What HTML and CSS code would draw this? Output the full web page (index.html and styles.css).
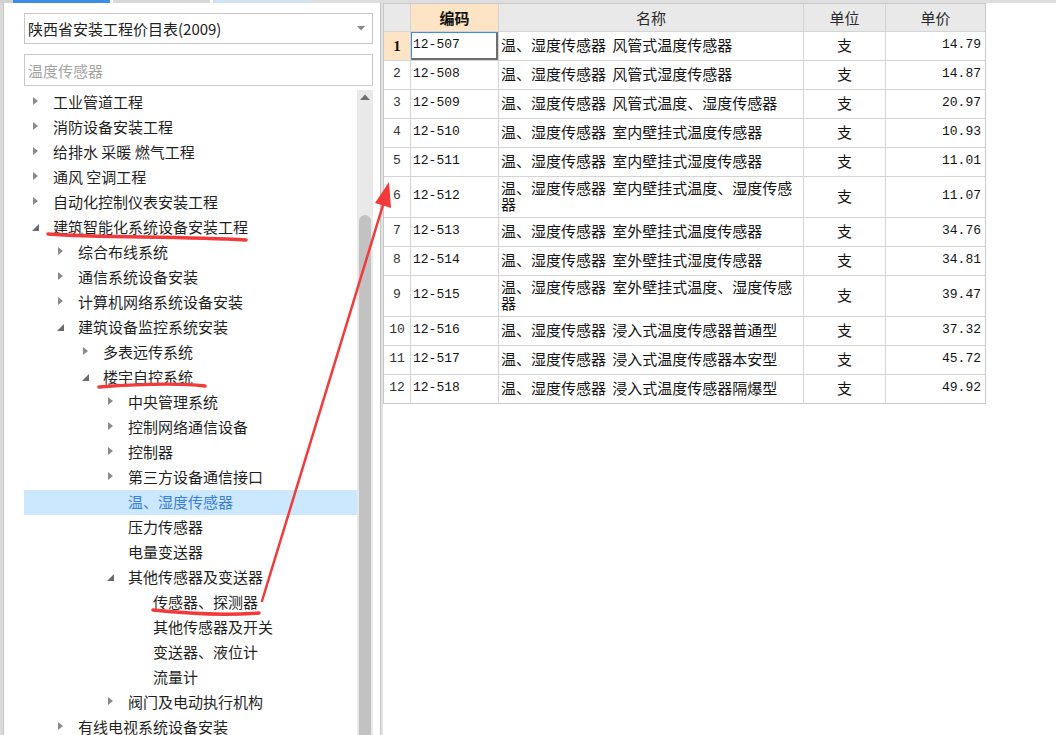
FILE: index.html
```html
<!DOCTYPE html>
<html lang="zh-CN">
<head>
<meta charset="utf-8">
<title>价目表</title>
<link rel="stylesheet" href="styles.css">
</head>
<body>
<div class="topbar">
  <span class="tab t0"></span><span class="tab t1"></span><span class="tab gap"></span><span class="tab t2"></span><span class="tab gap"></span><span class="tab t3"></span><span class="tab t4"></span>
</div>
<div class="main">
  <div class="edge"></div>
  <aside class="left">
    <div class="select">
      <span class="select-text">陕西省安装工程价目表(2009)</span>
      <svg class="caret" width="8" height="5" viewBox="0 0 8 5"><polygon points="0,0 8,0 4,4.5" fill="#8a8a8a"/></svg>
    </div>
    <input class="search" type="text" placeholder="温度传感器">
    <div class="treewrap">
      <ul class="tree">
        <li class="node l0"><span class="tw c"></span><span class="tx">工业管道工程</span></li>
        <li class="node l0"><span class="tw c"></span><span class="tx">消防设备安装工程</span></li>
        <li class="node l0"><span class="tw c"></span><span class="tx">给排水 采暖 燃气工程</span></li>
        <li class="node l0"><span class="tw c"></span><span class="tx">通风 空调工程</span></li>
        <li class="node l0"><span class="tw c"></span><span class="tx">自动化控制仪表安装工程</span></li>
        <li class="node l0"><span class="tw e"></span><span class="tx">建筑智能化系统设备安装工程</span></li>
        <li class="node l1"><span class="tw c"></span><span class="tx">综合布线系统</span></li>
        <li class="node l1"><span class="tw c"></span><span class="tx">通信系统设备安装</span></li>
        <li class="node l1"><span class="tw c"></span><span class="tx">计算机网络系统设备安装</span></li>
        <li class="node l1"><span class="tw e"></span><span class="tx">建筑设备监控系统安装</span></li>
        <li class="node l2"><span class="tw c"></span><span class="tx">多表远传系统</span></li>
        <li class="node l2"><span class="tw e"></span><span class="tx">楼宇自控系统</span></li>
        <li class="node l3"><span class="tw c"></span><span class="tx">中央管理系统</span></li>
        <li class="node l3"><span class="tw c"></span><span class="tx">控制网络通信设备</span></li>
        <li class="node l3"><span class="tw c"></span><span class="tx">控制器</span></li>
        <li class="node l3"><span class="tw c"></span><span class="tx">第三方设备通信接口</span></li>
        <li class="node l3 selected"><span class="tw"></span><span class="tx">温、湿度传感器</span></li>
        <li class="node l3"><span class="tw"></span><span class="tx">压力传感器</span></li>
        <li class="node l3"><span class="tw"></span><span class="tx">电量变送器</span></li>
        <li class="node l3"><span class="tw e"></span><span class="tx">其他传感器及变送器</span></li>
        <li class="node l4"><span class="tw"></span><span class="tx">传感器、探测器</span></li>
        <li class="node l4"><span class="tw"></span><span class="tx">其他传感器及开关</span></li>
        <li class="node l4"><span class="tw"></span><span class="tx">变送器、液位计</span></li>
        <li class="node l4"><span class="tw"></span><span class="tx">流量计</span></li>
        <li class="node l3"><span class="tw c"></span><span class="tx">阀门及电动执行机构</span></li>
        <li class="node l1"><span class="tw c"></span><span class="tx">有线电视系统设备安装</span></li>
      </ul>
      <div class="vscroll">
        <svg class="up" width="10" height="6" viewBox="0 0 10 6"><polygon points="0,6 5,0.5 10,6" fill="#6e6e6e"/></svg>
        <div class="thumb"></div>
      </div>
    </div>
  </aside>
  <div class="splitter"></div>
  <section class="right">
    <div class="grid">
      <div class="h corner"></div>
      <div class="h hl">编码</div>
      <div class="h">名称</div>
      <div class="h">单位</div>
      <div class="h">单价</div>

      <div class="rn rsel">1</div><div class="code focus">12-507</div><div class="name">温、湿度传感器 风管式温度传感器</div><div class="unit">支</div><div class="price">14.79</div>
      <div class="rn">2</div><div class="code">12-508</div><div class="name">温、湿度传感器 风管式湿度传感器</div><div class="unit">支</div><div class="price">14.87</div>
      <div class="rn">3</div><div class="code">12-509</div><div class="name">温、湿度传感器 风管式温度、湿度传感器</div><div class="unit">支</div><div class="price">20.97</div>
      <div class="rn">4</div><div class="code">12-510</div><div class="name">温、湿度传感器 室内壁挂式温度传感器</div><div class="unit">支</div><div class="price">10.93</div>
      <div class="rn">5</div><div class="code">12-511</div><div class="name">温、湿度传感器 室内壁挂式湿度传感器</div><div class="unit">支</div><div class="price">11.01</div>
      <div class="rn">6</div><div class="code">12-512</div><div class="name">温、湿度传感器 室内壁挂式温度、湿度传感器</div><div class="unit">支</div><div class="price">11.07</div>
      <div class="rn">7</div><div class="code">12-513</div><div class="name">温、湿度传感器 室外壁挂式温度传感器</div><div class="unit">支</div><div class="price">34.76</div>
      <div class="rn">8</div><div class="code">12-514</div><div class="name">温、湿度传感器 室外壁挂式湿度传感器</div><div class="unit">支</div><div class="price">34.81</div>
      <div class="rn">9</div><div class="code">12-515</div><div class="name">温、湿度传感器 室外壁挂式温度、湿度传感器</div><div class="unit">支</div><div class="price">39.47</div>
      <div class="rn">10</div><div class="code">12-516</div><div class="name">温、湿度传感器 浸入式温度传感器普通型</div><div class="unit">支</div><div class="price">37.32</div>
      <div class="rn">11</div><div class="code">12-517</div><div class="name">温、湿度传感器 浸入式温度传感器本安型</div><div class="unit">支</div><div class="price">45.72</div>
      <div class="rn">12</div><div class="code">12-518</div><div class="name">温、湿度传感器 浸入式温度传感器隔爆型</div><div class="unit">支</div><div class="price">49.92</div>
    </div>
  </section>
</div>
<svg class="annot" width="1056" height="735" viewBox="0 0 1056 735">
  <g fill="none" stroke="#f23a3a" stroke-linecap="round">
    <path d="M48 234 C 100 238, 180 236, 246 240" stroke-width="3.5"/>
    <path d="M99 387 C 140 384, 180 383, 205 386" stroke-width="3.5"/>
    <path d="M153 610 C 190 614, 230 615, 259 613" stroke-width="3.5"/>
    <path d="M262 601 L 383 205" stroke-width="2.5"/>
  </g>
  <polygon points="389,182 391,208 375,203" fill="#f23a3a"/>
</svg>
</body>
</html>
```

FILE: styles.css
```css
* { box-sizing: border-box; }
html, body { margin: 0; padding: 0; }
body {
  position: relative;
  width: 1056px;
  height: 735px;
  overflow: hidden;
  background: #ffffff;
  font-family: "Noto Sans CJK SC", "Noto Sans", sans-serif;
  color: #1f1f1f;
}

.topbar { display: flex; height: 3px; background: #dedede; }
.tab { display: block; height: 3px; }
.t0 { width: 13px; background: #d2d2d2; }
.t1 { width: 97px; background: #3c8de6; }
.gap { width: 3px; background: #ffffff; }
.t2 { width: 97px; background: #d8d8d8; }
.t3 { width: 97px; background: #cfe3f5; }
.t4 { flex: 1; background: #dedede; }

.main { display: flex; height: 732px; }
.edge { width: 4px; background: #d9d9d9; border-right: 1px solid #c6c6c6; }

.left {
  width: 376px;
  padding: 10px 7px 0 20px;
  display: flex;
  flex-direction: column;
  background: #ffffff;
}

.select {
  height: 31px;
  border: 1px solid #c6c6c6;
  display: flex;
  align-items: center;
  justify-content: space-between;
  padding: 0 7px 0 3px;
}
.select-text { font-size: 15px; line-height: 20px; color: #222; }
.caret { display: block; }

.search {
  margin-top: 10px;
  height: 32px;
  width: 100%;
  border: 1px solid #c8c8c8;
  padding: 0 3px;
  font-family: "Noto Sans CJK SC", "Noto Sans", sans-serif;
  font-size: 15px;
  color: #222;
  outline: none;
}
.search::placeholder { color: #a3a3a3; }

.treewrap { margin-top: 4px; flex: 1; display: flex; min-height: 0; }
.tree {
  list-style: none;
  margin: 0;
  padding: 0;
  width: 333px;
  overflow: hidden;
}
.node {
  height: 25px;
  display: flex;
  align-items: center;
  padding-bottom: 2px;
  font-size: 15px;
  line-height: 20px;
  color: #1f1f1f;
  white-space: nowrap;
}
.l0 { padding-left: 8px; }
.l1 { padding-left: 33px; }
.l2 { padding-left: 58px; }
.l3 { padding-left: 83px; }
.l4 { padding-left: 108px; }
.tw { width: 21px; height: 23px; flex: none; position: relative; }
.tw.c::before {
  content: "";
  position: absolute;
  left: 1px;
  top: 7px;
  border-style: solid;
  border-width: 4.5px 0 4.5px 5px;
  border-color: transparent transparent transparent #8a8a8a;
}
.tw.e::before {
  content: "";
  position: absolute;
  left: 0;
  top: 9px;
  border-style: solid;
  border-width: 0 0 7px 7px;
  border-color: transparent transparent #6a6a6a transparent;
}
.selected { background: #cce8ff; }
.selected .tx { color: #3a7fd5; }

.vscroll {
  width: 16px;
  background: #e9e9e9;
  display: flex;
  flex-direction: column;
  align-items: center;
}
.up { margin-top: 4px; display: block; }
.thumb {
  margin-top: 115px;
  width: 12px;
  flex: 1;
  background: #c2c2c2;
  border-radius: 6px 6px 0 0;
}

.splitter { width: 3px; background: #e2e2e2; border-left: 1px solid #c4c4c4; }

.right { flex: 1; background: #ffffff; }

.grid {
  display: grid;
  grid-template-columns: 26px 87px 304px 81px 99px;
  grid-template-rows: 27px;
  grid-auto-rows: minmax(28px, auto);
  gap: 1px;
  background: #d4d4d4;
  border: 1px solid #c8c8c8;
  width: max-content;
}
.grid > div {
  background: #ffffff;
  display: flex;
  align-items: center;
  padding: 4px 2px;
  font-size: 15px;
  line-height: 16px;
  color: #141414;
}
.grid > .h {
  background: #e9e9e9;
  justify-content: center;
  color: #2a2a2a;
  font-size: 15px;
}
.grid > .hl { background: #fde4c4; font-weight: bold; color: #111; }
.grid > .rn {
  justify-content: center;
  font-family: "Liberation Mono", monospace;
  font-size: 13px;
  color: #333;
  padding: 0 0 3px;
}
.grid > .rsel {
  background: #fde4c4;
  font-family: "Liberation Serif", serif;
  font-weight: bold;
  font-size: 15px;
  color: #111;
  padding: 0 0 1px;
}
.grid > .code {
  font-family: "Liberation Mono", monospace;
  font-size: 13px;
  padding: 0 2px 3px;
}
.grid > .focus {
  box-shadow: inset 1px 1px 0 #3b8de6, inset -2px -2px 0 #6e6e6e;
}
.grid > .name { padding-left: 2px; padding-right: 4px; padding-bottom: 5px; padding-top: 3px; word-spacing: 3px; }
.grid > .unit { justify-content: center; padding-bottom: 5px; padding-top: 3px; }
.grid > .price {
  justify-content: flex-end;
  font-family: "Liberation Mono", monospace;
  font-size: 13px;
  padding: 0 4px 3px 2px;
}

.annot {
  position: absolute;
  left: 0;
  top: 0;
  pointer-events: none;
}
```
